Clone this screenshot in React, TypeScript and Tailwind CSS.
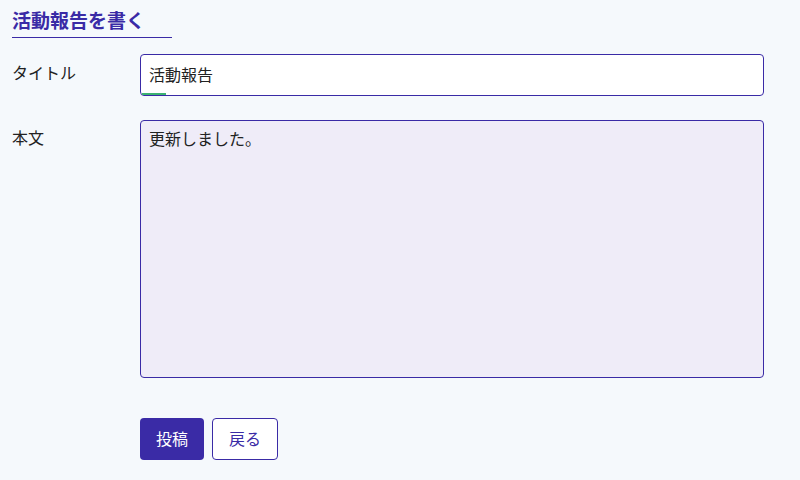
import React from "react";

export default function App() {
  return (
    <div className="w-[800px] h-[480px] bg-[#f5f9fc] text-[#222] overflow-hidden" style={{ fontFamily: '"Noto Sans", "Noto Sans CJK JP", sans-serif' }}>
      <div className="px-3 pt-[6px]">
        <h1 className="inline-block w-[160px] border-b border-[#3a2ba6] text-[19px] font-bold text-[#3a2ba6] leading-[30px] pb-[1px]">活動報告を書く</h1>
      </div>
      <div className="flex mt-[16px] px-3">
        <div className="w-[128px] text-[16px] pt-[7px]">タイトル</div>
        <div className="relative w-[624px] h-[42px] bg-white border border-[#3a2ba6] rounded-[4px] flex items-center px-2 text-[16px]">
          活動報告
          <div className="absolute left-[1px] bottom-0 w-[24px] h-[2px] bg-[#3cb371]" />
        </div>
      </div>
      <div className="flex mt-[24px] px-3">
        <div className="w-[128px] text-[16px] pt-[6px]">本文</div>
        <div className="w-[624px] h-[258px] bg-[#efecf8] border border-[#3a2ba6] rounded-[4px] px-2 pt-[6px] text-[16px]">更新しました。</div>
      </div>
      <div className="flex gap-2 mt-[40px] pl-[140px]">
        <button className="w-[64px] h-[42px] rounded-[4px] bg-[#3a2ba6] text-white text-[16px]">投稿</button>
        <button className="w-[66px] h-[42px] rounded-[4px] bg-white border border-[#3a2ba6] text-[#3a2ba6] text-[16px]">戻る</button>
      </div>
    </div>
  );
}
